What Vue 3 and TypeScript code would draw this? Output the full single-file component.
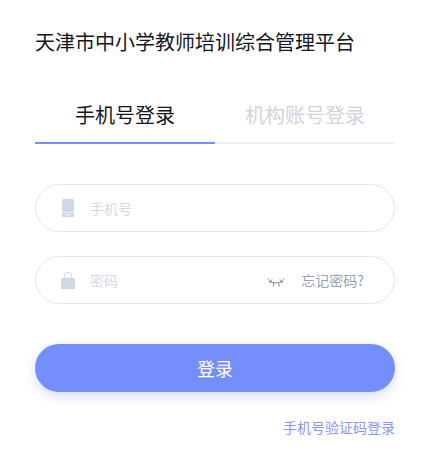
<script setup lang="ts">
import { ref } from 'vue'
const phone = ref('')
const password = ref('')
</script>

<template>
  <div class="page">
    <h1 class="title">天津市中小学教师培训综合管理平台</h1>
    <div class="tabs">
      <div class="tab active">手机号登录</div>
      <div class="tab">机构账号登录</div>
    </div>
    <div class="field first">
      <svg class="icon" width="14" height="18" viewBox="0 0 14 18">
        <path fill="#d0d7e5" fill-rule="evenodd" d="M2.500 0h9A1.500 1.500 0 0 1 13 1.500v15a1.500 1.500 0 0 1-1.500 1.500h-9A1.500 1.500 0 0 1 1 16.500v-15A1.500 1.500 0 0 1 2.500 0zM1 13.500h12v-.7H1zM5 15h4.500v1.200H5z" />
      </svg>
      <input v-model="phone" class="input" placeholder="手机号" />
    </div>
    <div class="field second">
      <svg class="icon" width="14" height="17" viewBox="0 0 14 17">
        <path fill="#d0d7e5" d="M1.500 6H3.200V3.800a3.800 3.800 0 0 1 7.600 0V6h1.700A1.500 1.500 0 0 1 14 7.500v8a1.500 1.500 0 0 1-1.500 1.500h-11A1.500 1.500 0 0 1 0 15.500v-8A1.500 1.500 0 0 1 1.500 6zM4.200 6h5.600V3.800a2.800 2.800 0 0 0-5.600 0z" />
      </svg>
      <input v-model="password" class="input" type="password" placeholder="密码" />
      <svg class="eye" width="18" height="10" viewBox="0 0 18 10" fill="none" stroke="#80848c" stroke-width="0.9">
        <path d="M2 4.500Q9 7.500 16 4.500M1 1.500 4.500 6M17 1.500 13.500 6M3 6 5 2.500M15 6 13 2.500M6.500 6V9.500M11.500 6 12.500 9.500" />
      </svg>
      <a class="forgot">忘记密码?</a>
    </div>
    <button class="submit" type="button">登录</button>
    <div class="footer"><a class="sms">手机号验证码登录</a></div>
  </div>
</template>

<style scoped>
.page {
  width: 431px;
  height: 470px;
  box-sizing: border-box;
  padding: 30px 36px 0 35px;
  background: #fff;
  font-family: "Noto Sans CJK SC", "Liberation Sans", sans-serif;
  overflow: hidden;
}
.title {
  margin: 0;
  font-size: 20px;
  font-weight: 400;
  line-height: 24px;
  color: #14161f;
}
.tabs {
  display: flex;
  margin-top: 34px;
  height: 54px;
  border-bottom: 2px solid #f1f2f6;
}
.tab {
  flex: 1;
  height: 54px;
  line-height: 54px;
  box-sizing: content-box;
  text-align: center;
  font-size: 20px;
  color: #d2d3dc;
}
.tab.active {
  color: #14161f;
  border-bottom: 2px solid #748ffc;
}
.field {
  display: flex;
  align-items: center;
  height: 48px;
  box-sizing: border-box;
  border: 1px solid #e4e7f1;
  border-radius: 24px;
  padding: 0 30px 0 25px;
}
.first { margin-top: 40px; }
.second { margin-top: 24px; }
.icon { flex: none; }
.input {
  flex: 1;
  min-width: 0;
  margin-left: 15px;
  border: 0;
  outline: 0;
  padding: 0;
  background: transparent;
  font: inherit;
  font-size: 14px;
  color: #14161f;
}
.input::placeholder { color: #d8d9e6; opacity: 1; }
.eye { flex: none; margin: 4px 16px 0 0; }
.forgot {
  font-size: 14px;
  color: #9aa1b2;
}
.submit {
  display: block;
  width: 100%;
  height: 48px;
  margin-top: 40px;
  border: 0;
  border-radius: 24px;
  padding: 0;
  background: #748ffc;
  box-shadow: 0 4px 12px rgba(116, 143, 252, 0.3);
  color: #fff;
  font: inherit;
  font-size: 18px;
}
.footer {
  margin-top: 24px;
  text-align: right;
  font-size: 14px;
  line-height: 22px;
}
.sms { color: #8a96f5; }
</style>
